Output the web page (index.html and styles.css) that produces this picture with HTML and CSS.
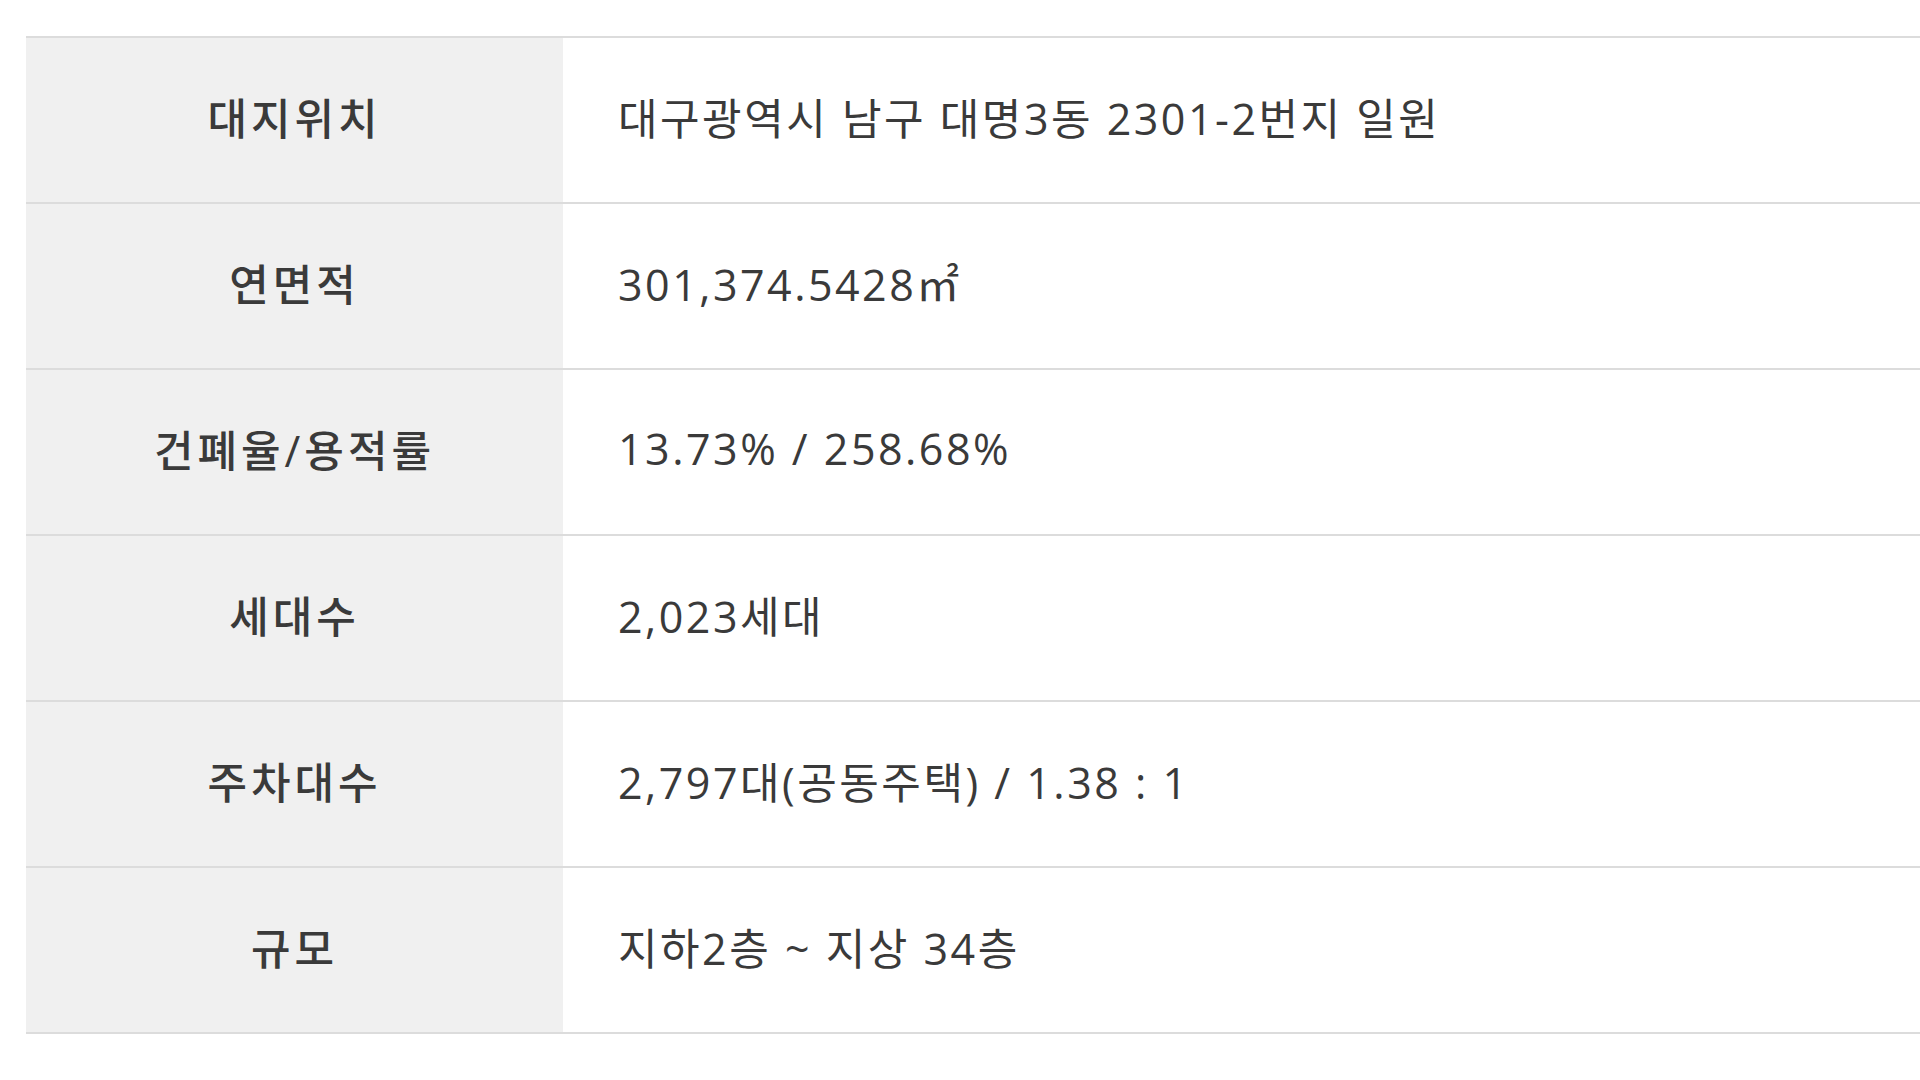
FILE: index.html
```html
<!DOCTYPE html>
<html lang="ko">
<head>
<meta charset="utf-8">
<title>사업개요</title>
<link rel="stylesheet" href="styles.css">
</head>
<body>
<div class="overview">
  <div class="row"><div class="label">대지위치</div><div class="value">대구광역시 남구 대명3동 2301-2번지 일원</div></div>
  <div class="row"><div class="label">연면적</div><div class="value">301,374.5428㎡</div></div>
  <div class="row"><div class="label">건폐율/용적률</div><div class="value">13.73% / 258.68%</div></div>
  <div class="row"><div class="label">세대수</div><div class="value">2,023세대</div></div>
  <div class="row"><div class="label">주차대수</div><div class="value">2,797대(공동주택) / 1.38 : 1</div></div>
  <div class="row"><div class="label">규모</div><div class="value">지하2층 ~ 지상 34층</div></div>
</div>
</body>
</html>
```

FILE: styles.css
```css
html, body {
  margin: 0;
  padding: 0;
  background: #ffffff;
  overflow: hidden;
}
body {
  width: 1920px;
  height: 1080px;
  font-family: "Open Sans", "Noto Sans CJK KR", sans-serif;
  color: #3a3a3a;
}
.overview {
  margin: 36px 0 0 26px;
  width: 1894px;
  border-top: 2px solid #dcdcdc;
}
.row {
  display: grid;
  grid-template-columns: 537px 1fr;
  height: 164px;
  border-bottom: 2px solid #dcdcdc;
}
.label {
  background: #f0f0f0;
  display: flex;
  align-items: center;
  justify-content: center;
  padding-bottom: 7px;
  font-size: 43px;
  font-weight: 500;
  letter-spacing: 4px;
}
.value {
  display: flex;
  align-items: center;
  padding-left: 55px;
  padding-bottom: 7px;
  font-size: 43px;
  letter-spacing: 2.5px;
}
```
